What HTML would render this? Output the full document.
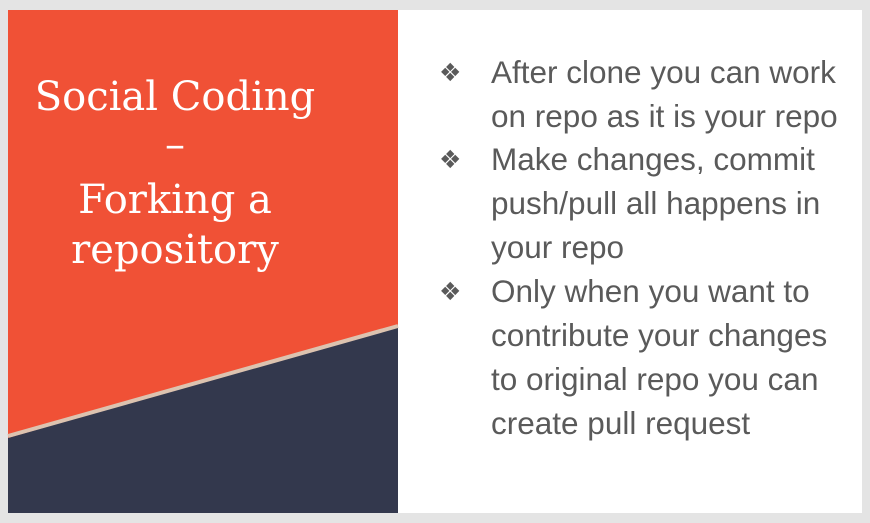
<!DOCTYPE html>
<html><head><style>
body{margin:0;width:870px;height:523px;background:#e4e4e4;position:relative;overflow:hidden}
.slide{position:absolute;left:8px;top:10px;width:854px;height:503px;background:#fff}
.t{position:absolute;left:8px;width:334px;text-align:center;color:#fff;font-family:"DejaVu Serif",serif;font-size:40px;white-space:nowrap}
.r{position:absolute;font-family:"Liberation Sans",sans-serif;font-size:31.5px;color:#5a5a5a;white-space:nowrap}
.b{position:absolute;left:439px;font-size:25px;color:#5a5a5a;font-family:"DejaVu Sans",sans-serif}
</style></head><body>
<div class="slide"></div>
<svg style="position:absolute;left:0;top:0" width="870" height="523">
<rect x="8" y="10" width="390" height="503" fill="#f05136"/>
<polygon points="8,438 398,326 398,513 8,513" fill="#33384d"/>
<line x1="8" y1="436" x2="398" y2="326" stroke="#dcc3b0" stroke-width="4"/>
</svg>
<div class="t" style="top:74px">Social Coding</div>
<div class="t" style="top:122px">–</div>
<div class="t" style="top:177px">Forking a</div>
<div class="t" style="top:227px">repository</div>
<div class="b" style="top:58px">❖</div>
<div class="b" style="top:145px">❖</div>
<div class="b" style="top:277px">❖</div>
<div class="r" style="left:491px;top:54px">After clone you can work</div>
<div class="r" style="left:491px;top:98px">on repo as it is your repo</div>
<div class="r" style="left:491px;top:141px">Make changes, commit</div>
<div class="r" style="left:491px;top:185px">push/pull all happens in</div>
<div class="r" style="left:491px;top:229px">your repo</div>
<div class="r" style="left:491px;top:273px">Only when you want to</div>
<div class="r" style="left:491px;top:317px">contribute your changes</div>
<div class="r" style="left:491px;top:361px">to original repo you can</div>
<div class="r" style="left:491px;top:405px">create pull request</div>
</body></html>
